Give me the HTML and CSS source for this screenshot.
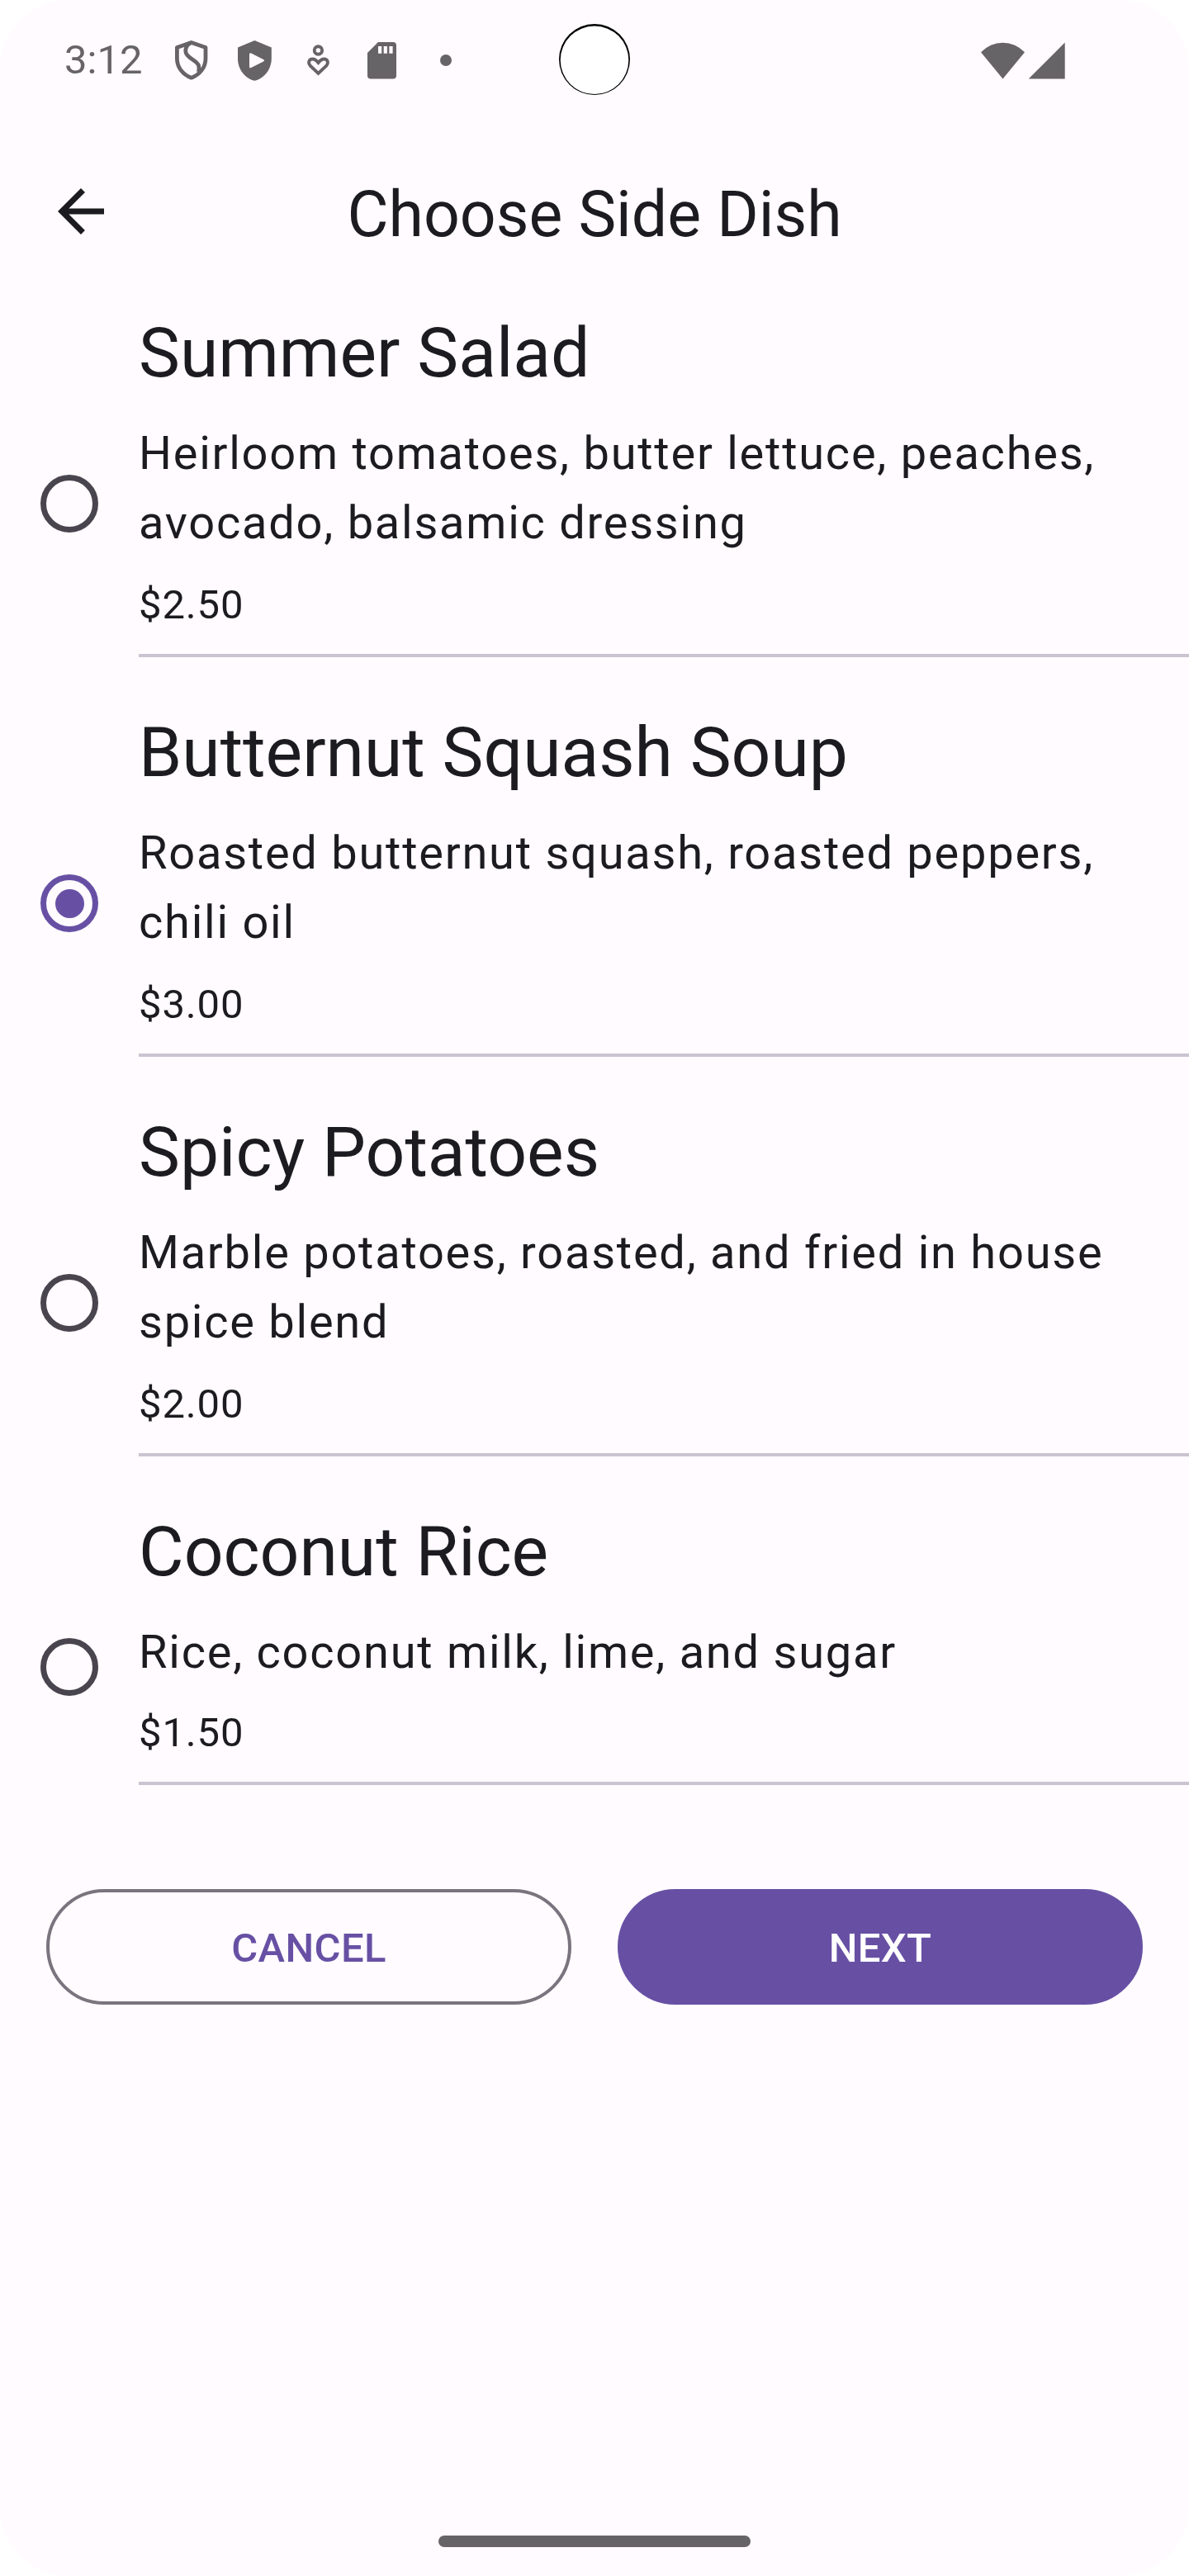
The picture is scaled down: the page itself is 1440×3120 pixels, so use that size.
FILE: index.html
```html
<!DOCTYPE html>
<html lang="en">
<head>
<meta charset="utf-8">
<title>Choose Side Dish</title>
<link rel="stylesheet" href="styles.css">
</head>
<body>
<div class="screen">
  <div class="status-bar">
    <span class="clock">3:12</span>
    <span class="cell"><svg width="42" height="50" viewBox="0 0 42 50" fill="none" stroke="currentColor" stroke-width="4.8" stroke-linejoin="round"><path d="M20.7 3.5L38 9.4V23C38 33.5 31 42.5 20.7 46.2C10.4 42.5 3.4 33.5 3.4 23V9.4Z"/><path d="M19.5 4C14.5 6.500 13 12 14.2 16C16.5 23 26.5 24.5 29.5 31C30.3 33.5 30 36.5 29.5 39"/></svg></span>
    <span class="cell"><svg width="41" height="49" viewBox="0 0 41 49"><path fill="currentColor" fill-rule="evenodd" d="M20.4 0L40.8 8.6V22C40.8 35 32 46 20.4 48.8C8.8 46 0 35 0 22V8.6ZM14 17V31.7Q14 34 16.2 33.1L31 25.5Q33 24.3 31 23.1L16.2 15.5Q14 14.7 14 17Z"/></svg></span>
    <span class="cell"><svg width="27" height="38" viewBox="0 0 27 38" fill="none" stroke="currentColor" stroke-width="3.9"><circle cx="13.4" cy="7" r="4.7"/><path d="M13.5 34.9L3.8 25.7C.6 22 2.2 17.5 6.7 17.5C10 17.5 11.5 19.5 13.5 22C15.5 19.5 17 17.5 20.3 17.5C24.8 17.5 26.4 22 23.2 25.7Z"/></svg></span>
    <span class="cell"><svg width="35" height="45" viewBox="0 0 35 45"><path fill="currentColor" d="M13 0H31Q35 0 35 4V40.5Q35 44.5 31 44.5H4Q0 44.5 0 40.5V13Z"/><path fill="#fffbff" d="M13 5h4.2v8.800H13zM19.7 5h4.2v8.8h-4.2zM26.4 5h4.2v8.8h-4.2z"/></svg></span>
    <span class="cell"><svg width="14" height="14" viewBox="0 0 14 14"><circle cx="7" cy="7" r="7" fill="currentColor"/></svg></span>
    <svg class="network" width="102" height="45" viewBox="0 0 102 45" fill="currentColor"><path d="M0 12.3A36 36 0 0 1 53 12.3L26.5 44.5Z"/><path d="M57.7 44.5L101.7 .5V44.5Z"/></svg>
    <svg class="camera" width="88" height="88" viewBox="0 0 88 88"><circle cx="44" cy="44" r="43"/><circle cx="44" cy="44.8" r="41.3" fill="#fff"/></svg>
  </div>

  <header class="app-bar">
    <svg class="back" width="84" height="84" viewBox="0 0 24 24"><path fill="currentColor" d="M20 11H7.83l5.59-5.59L12 4l-8 8 8 8 1.41-1.41L7.83 13H20v-2z"/></svg>
    <h1 class="page-title">Choose Side Dish</h1>
  </header>

  <main>
    <ul class="dishes">
      <li class="dish">
        <span class="radio"></span>
        <div class="dish-body">
          <h2 class="dish-name">Summer Salad</h2>
          <p class="dish-text">Heirloom tomatoes, butter lettuce, peaches, avocado, balsamic dressing</p>
          <p class="dish-price">$2.50</p>
        </div>
      </li>
      <li class="dish">
        <span class="radio radio-on"></span>
        <div class="dish-body">
          <h2 class="dish-name">Butternut Squash Soup</h2>
          <p class="dish-text">Roasted butternut squash, roasted peppers, chili oil</p>
          <p class="dish-price">$3.00</p>
        </div>
      </li>
      <li class="dish">
        <span class="radio"></span>
        <div class="dish-body">
          <h2 class="dish-name">Spicy Potatoes</h2>
          <p class="dish-text">Marble potatoes, roasted, and fried in house spice blend</p>
          <p class="dish-price">$2.00</p>
        </div>
      </li>
      <li class="dish">
        <span class="radio"></span>
        <div class="dish-body">
          <h2 class="dish-name">Coconut Rice</h2>
          <p class="dish-text dish-text-single">Rice, coconut milk, lime, and sugar</p>
          <p class="dish-price">$1.50</p>
        </div>
      </li>
    </ul>
    <div class="actions">
      <button class="btn btn-outlined">CANCEL</button>
      <button class="btn btn-filled">NEXT</button>
    </div>
  </main>
  <div class="nav-handle"></div>
</div>
</body>
</html>
```
FILE: styles.css
```css
* { box-sizing: border-box; margin: 0; padding: 0; }

html { background: #fff; }

body {
  font-family: Roboto, "Liberation Sans", sans-serif;
  color: #1c1b1f;
}

.screen {
  display: flex;
  flex-direction: column;
  width: 1440px;
  height: 3120px;
  padding-bottom: 35px;
  border-radius: 84px;
  background: #fffbff;
  overflow: hidden;
}

.status-bar {
  position: relative;
  display: flex;
  align-items: center;
  height: 144px;
  padding: 2px 150px 0 78px;
  color: #676468;
}

.clock {
  width: 115px;
  font-size: 49px;
  line-height: 58px;
}

.cell {
  display: flex;
  justify-content: center;
  width: 77px;
}

.network { margin-left: auto; }

.camera {
  position: absolute;
  top: 28px;
  left: 676px;
  fill: #000;
}

.app-bar {
  display: grid;
  grid-template-columns: 84px 1fr 84px;
  align-items: center;
  height: 224px;
  padding: 0 56px;
}

.page-title {
  padding-top: 8px;
  font-size: 77px;
  font-weight: 400;
  line-height: 98px;
  text-align: center;
}

.dishes { list-style: none; }

.dish {
  display: flex;
  align-items: center;
}

.radio {
  display: grid;
  place-items: center;
  flex: none;
  width: 70px;
  height: 70px;
  margin: 0 49px;
  border: 7px solid #49454f;
  border-radius: 50%;
}

.radio-on { border-color: #6750a4; }

.radio-on::after {
  content: "";
  width: 35px;
  height: 35px;
  border-radius: 50%;
  background: #6750a4;
}

.dish-body {
  flex: 1;
  padding: 4px 0 56px;
}

.dish-name {
  font-size: 84px;
  font-weight: 400;
  line-height: 112px;
}

.dish-text {
  margin-top: 23px;
  font-size: 56px;
  line-height: 84px;
  letter-spacing: 1.75px;
}

.dish-text-single { margin-bottom: -2px; }

.dish-price {
  margin-top: 23px;
  padding-bottom: 24px;
  border-bottom: 4px solid #cac4d0;
  font-size: 49px;
  line-height: 70px;
  letter-spacing: 0.875px;
}

.actions {
  display: flex;
  gap: 56px;
  padding: 70px 56px 0;
}

.btn {
  flex: 1;
  height: 140px;
  padding-top: 4px;
  border: 4px solid transparent;
  border-radius: 70px;
  font: 500 49px/70px Roboto, "Liberation Sans", sans-serif;
  letter-spacing: 0.35px;
}

.btn-outlined {
  border-color: #79747e;
  background: none;
  color: #6750a4;
}

.btn-filled {
  border-color: #6750a4;
  background: #6750a4;
  color: #fff;
}

.nav-handle {
  width: 378px;
  height: 14px;
  margin: auto auto 0;
  border-radius: 7px;
  background: #676468;
}
```
